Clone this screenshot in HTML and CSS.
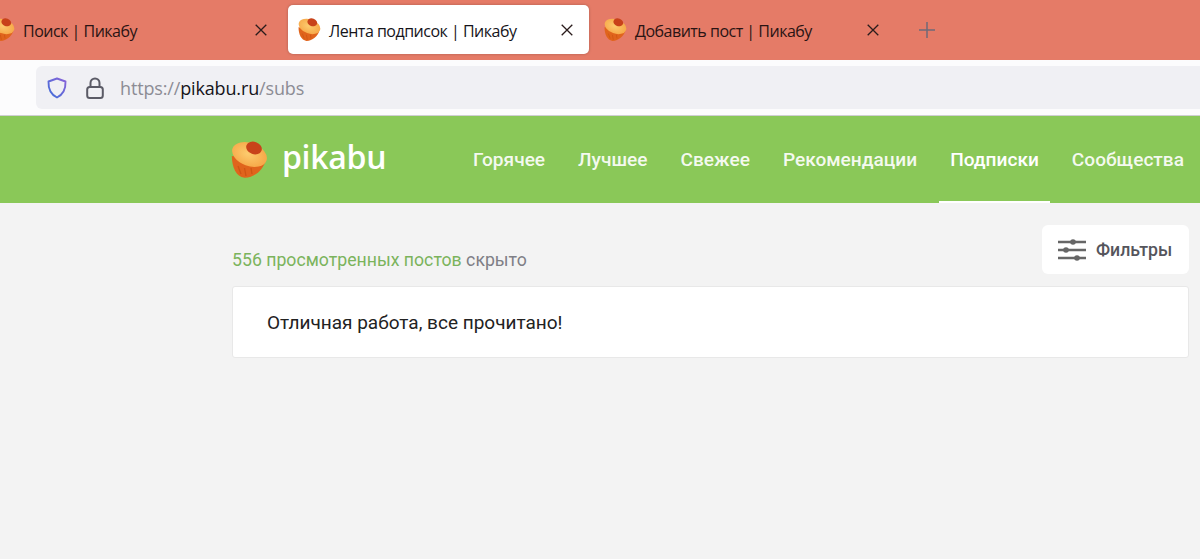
FILE: index.html
```html
<!DOCTYPE html>
<html lang="ru">
<head>
<meta charset="utf-8">
<title>Лента подписок | Пикабу</title>
<link rel="stylesheet" href="styles.css">
</head>
<body>
<svg class="defs" width="0" height="0" aria-hidden="true">
  <defs>
    <radialGradient id="capfill" cx=".45" cy=".5" r=".6">
      <stop offset="0" stop-color="#fccb6e"/>
      <stop offset="1" stop-color="#f6a545"/>
    </radialGradient>
    <symbol id="muffin" viewBox="0 0 37 37">
      <path d="M.8 15 C1 26 5 36 13.5 36.8 C23 37 32 29 34.5 20 Z" fill="#e0641c"/>
      <path d="M7 25 L10 33 M13.5 27 L15 35 M20 27 L21 33" stroke="#cf5513" stroke-width="1.3" fill="none"/>
      <ellipse cx="18.5" cy="13.5" rx="18" ry="11.5" transform="rotate(20 18.5 13.5)" fill="url(#capfill)"/>
      <ellipse cx="23" cy="7" rx="8" ry="6.2" transform="rotate(20 23 7)" fill="#c8421a"/>
    </symbol>
    <symbol id="close" viewBox="0 0 12 12">
      <path d="M.7.7l10.6 10.6M11.3.7L.7 11.3" stroke="#2a1c1c" stroke-width="1.3" fill="none"/>
    </symbol>
  </defs>
</svg>
<div class="tabbar">
  <div class="tab">
    <svg class="favicon"><use href="#muffin"/></svg>
    <span class="tab-title">Поиск | Пикабу</span>
    <svg class="tab-close"><use href="#close"/></svg>
  </div>
  <div class="tab tab-active">
    <svg class="favicon"><use href="#muffin"/></svg>
    <span class="tab-title">Лента подписок | Пикабу</span>
    <svg class="tab-close"><use href="#close"/></svg>
  </div>
  <div class="tab">
    <svg class="favicon"><use href="#muffin"/></svg>
    <span class="tab-title">Добавить пост | Пикабу</span>
    <svg class="tab-close"><use href="#close"/></svg>
  </div>
  <svg class="new-tab" viewBox="0 0 16 16"><path d="M8 0v16M0 8h16" stroke="#6f6a78" stroke-width="1.5" fill="none"/></svg>
</div>
<div class="toolbar">
  <div class="urlbar">
    <svg class="shield" viewBox="0 0 20 22"><path d="M10 1.5 L18.5 4.5 C18.8 12 16 17.5 10 20.5 C4 17.5 1.2 12 1.5 4.5 Z" fill="none" stroke="url(#sg)" stroke-width="1.9" stroke-linejoin="round"/><defs><linearGradient id="sg" x1="0" y1="1" x2="1" y2="0"><stop offset="0" stop-color="#3f6fd8"/><stop offset="1" stop-color="#8a63d8"/></linearGradient></defs></svg>
    <svg class="lock" viewBox="0 0 18 22"><path d="M4.5 10V6a4.5 4.5 0 0 1 9 0v4" fill="none" stroke="#5b5b66" stroke-width="2"/><rect x="1.2" y="10" width="15.6" height="11" rx="2.5" fill="none" stroke="#5b5b66" stroke-width="2"/></svg>
    <span class="url"><span class="url-dim">https://</span>pikabu.ru<span class="url-dim">/subs</span></span>
  </div>
</div>
<header class="site-header">
  <a class="brand">
    <svg class="brand-icon"><use href="#muffin"/></svg>
    <span class="brand-name">pikabu</span>
  </a>
  <nav class="nav">
    <a class="nav-item">Горячее</a>
    <a class="nav-item">Лучшее</a>
    <a class="nav-item">Свежее</a>
    <a class="nav-item">Рекомендации</a>
    <a class="nav-item nav-active">Подписки</a>
    <a class="nav-item">Сообщества</a>
  </nav>
</header>
<main class="content">
  <div class="top-row">
    <p class="hidden-note"><span class="hidden-link">556 просмотренных постов</span> скрыто</p>
    <button class="filters">
      <svg class="filters-icon" viewBox="0 0 28 22"><g stroke="#666" fill="#666"><path d="M0 3h28M0 11h28M0 19h28" stroke-width="2.4"/><circle cx="15" cy="3" r="2.8" stroke="none"/><circle cx="8" cy="11" r="2.8" stroke="none"/><circle cx="19" cy="19" r="2.8" stroke="none"/></g></svg>
      <span>Фильтры</span>
    </button>
  </div>
  <section class="card">Отличная работа, все прочитано!</section>
</main>
</body>
</html>
```
FILE: styles.css
```css
* { box-sizing: border-box; }
html, body { margin: 0; height: 559px; overflow: hidden; background: #f3f3f3; }
body { font-family: Roboto, "Liberation Sans", sans-serif; }
.defs { position: absolute; }

.tabbar {
  display: flex;
  align-items: center;
  height: 60px;
  margin-left: -18px;
  padding-bottom: 1px;
  background: #e57b67;
}
.tab {
  display: flex;
  align-items: center;
  flex: 0 0 301px;
  height: 49px;
  margin-right: 5px;
  padding: 0 10px;
  border-radius: 5px;
  font-family: "Open Sans", "Noto Sans", sans-serif;
  font-size: 16px;
  color: #2a1414;
}
.tab-active { background: #fff; color: #15141a; box-shadow: 0 0 3px rgba(0,0,0,.25); }
.favicon { width: 23px; height: 23px; flex: none; }
.tab-title { flex: 1; margin-left: 8px; padding-top: 2px; letter-spacing: -.5px; white-space: nowrap; }
.tab-close { width: 12px; height: 12px; flex: none; margin-right: 6px; }
.new-tab { width: 16px; height: 16px; margin-left: 19px; }

.toolbar {
  height: 56px;
  padding: 6px 0 6px 36px;
  background: #fcfcfd;
  border-bottom: 1px solid #cfcfd2;
}
.urlbar {
  display: flex;
  align-items: center;
  height: 43px;
  padding-left: 11px;
  background: #f0f0f4;
  border-radius: 6px 0 0 6px;
}
.shield { width: 20px; height: 22px; flex: none; }
.lock { width: 18px; height: 22px; flex: none; margin-left: 19px; }
.url {
  margin-left: 16px;
  font-family: "Open Sans", "Noto Sans", sans-serif;
  font-size: 18px;
  color: #15141a;
  letter-spacing: -.15px;
}
.url-dim { color: #8c8c94; }

.site-header {
  display: flex;
  align-items: center;
  height: 87px;
  padding-left: 231px;
  background: #8ac858;
  white-space: nowrap;
}
.brand { display: flex; align-items: center; flex: none; width: 231px; margin-top: -1px; }
.brand-icon { width: 37px; height: 37px; flex: none; }
.brand-name {
  margin-left: 14px;
  margin-top: -5px;
  font-family: "Open Sans", sans-serif;
  font-weight: 600;
  font-size: 32px;
  letter-spacing: -.3px;
  line-height: 40px;
  color: #fff;
}
.nav { display: flex; align-self: stretch; gap: 11px; }
.nav-item {
  display: flex;
  align-items: center;
  padding: 2px 11px 0;
  font-size: 19.1px;
  font-weight: 500;
  color: rgba(255,255,255,.92);
  border-bottom: 2px solid transparent;
}
.nav-active { color: #fff; border-bottom-color: #fff; }

.content { padding: 22px 11px 0 232px; }
.top-row { display: flex; justify-content: space-between; align-items: flex-end; height: 49px; }
.hidden-note { margin: 0 0 2px; font-size: 17.7px; line-height: 24px; color: #7f7f86; }
.hidden-link { color: #7bb35c; }
.filters {
  display: flex;
  align-items: center;
  width: 147px;
  height: 49px;
  padding: 0 0 0 16px;
  border: 0;
  border-radius: 6px;
  background: #fff;
  font-family: inherit;
  font-size: 17.7px;
  font-weight: 500;
  color: #55555c;
}
.filters-icon { width: 28px; height: 22px; flex: none; margin-right: 10px; }
.card {
  height: 72px;
  margin-top: 12px;
  padding: 0 34px;
  display: flex;
  align-items: center;
  background: #fff;
  border: 1px solid #e8e8e8;
  border-radius: 3px;
  font-size: 19px;
  color: #222;
}
```
